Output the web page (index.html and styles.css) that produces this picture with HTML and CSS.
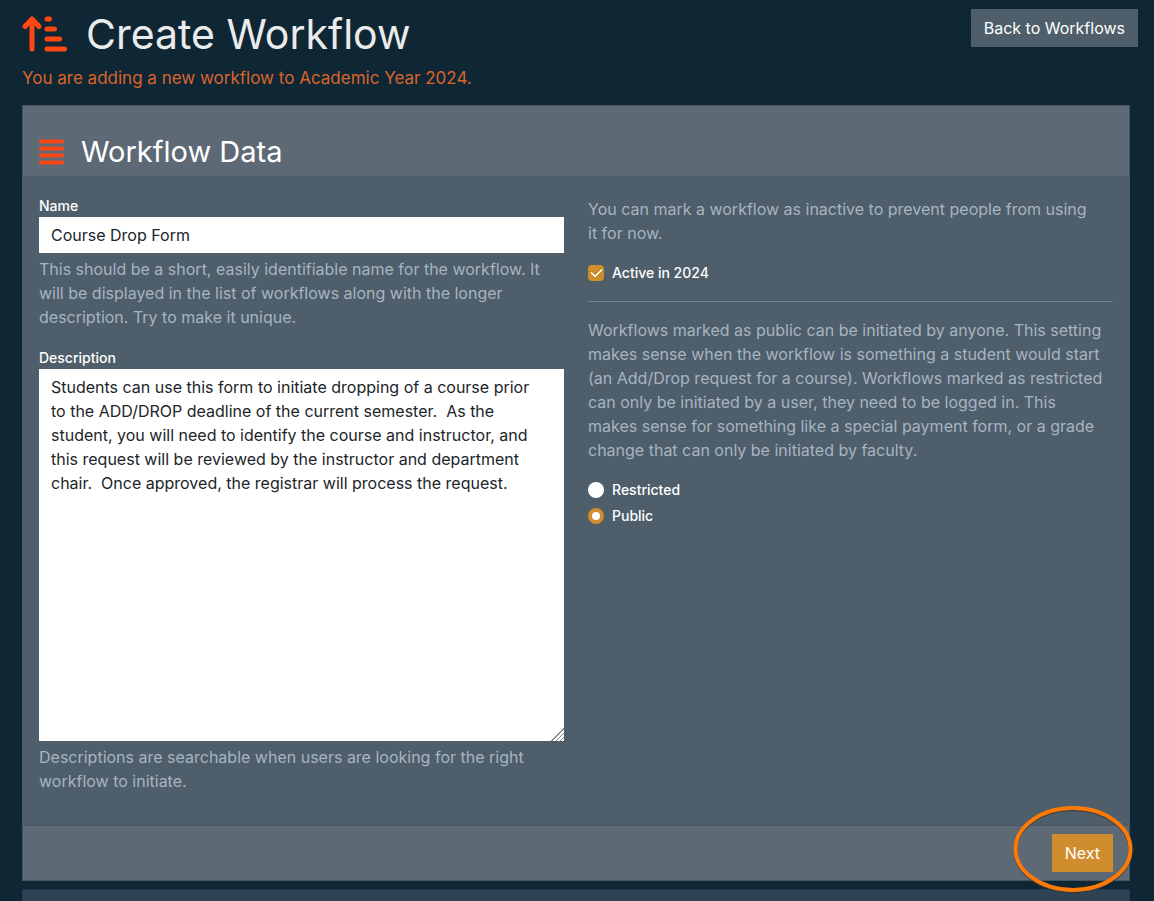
FILE: index.html
```html
<!DOCTYPE html>
<html lang="en">
<head>
<meta charset="utf-8">
<meta name="viewport" content="width=device-width, initial-scale=1">
<title>Create Workflow</title>
<link rel="stylesheet" href="styles.css">
</head>
<body>
<header class="page-header">
  <div class="heading">
    <h1 class="page-title">
      <svg class="title-icon" viewBox="0 0 46 36" aria-hidden="true">
        <path d="M10 33V4M3 10.500L10 3L17 10.500M25 3h2.500M25 13h7.500M25 23h12.500M25 33h17.500"/>
      </svg>
      Create Workflow
    </h1>
    <p class="notice">You are adding a new workflow to Academic Year 2024.</p>
  </div>
  <button type="button" class="button">Back to Workflows</button>
</header>

<main class="content">
  <form class="panel">
    <div class="panel-header">
      <svg class="panel-icon" viewBox="0 0 25 26" aria-hidden="true">
        <path d="M2 2.500h21M2 9.500h21M2 16.500h21M2 23.500h21"/>
      </svg>
      <h2 class="panel-title">Workflow Data</h2>
    </div>
    <div class="panel-body">
      <div class="column">
        <div class="field">
          <label class="label" for="name">Name</label>
          <input class="input" id="name" type="text" value="Course Drop Form">
          <p class="help">This should be a short, easily identifiable name for the workflow. It will be displayed in the list of workflows along with the longer description. Try to make it unique.</p>
        </div>
        <div class="field">
          <label class="label" for="description">Description</label>
          <textarea class="input textarea" id="description" rows="15">Students can use this form to initiate dropping of a course prior to the ADD/DROP deadline of the current semester.  As the student, you will need to identify the course and instructor, and this request will be reviewed by the instructor and department chair.  Once approved, the registrar will process the request.</textarea>
          <p class="help">Descriptions are searchable when users are looking for the right workflow to initiate.</p>
        </div>
      </div>
      <div class="column options">
        <p class="copy">You can mark a workflow as inactive to prevent people from using it&nbsp;for now.</p>
        <label class="choice"><input class="check" type="checkbox" checked>Active in 2024</label>
        <hr class="rule">
        <p class="copy">Workflows marked as public can be initiated by anyone. This setting makes sense when the workflow is something a student would start (an Add/Drop request for a course). Workflows marked as restricted can only be initiated by a user, they need to be logged in. This makes sense for something like a special payment form, or a grade change that can only be initiated by faculty.</p>
        <label class="choice"><input class="radio" type="radio" name="access">Restricted</label>
        <label class="choice"><input class="radio" type="radio" name="access" checked>Public</label>
      </div>
    </div>
    <div class="panel-footer">
      <div class="next">
        <button type="button" class="button button-primary">Next</button>
        <svg class="ring" viewBox="0 0 128 96" aria-hidden="true">
          <ellipse class="ring-shade" cx="64" cy="49" rx="57.500" ry="41"/>
          <ellipse class="ring-line" cx="64" cy="48" rx="57.500" ry="41"/>
        </svg>
      </div>
    </div>
  </form>
  <section class="panel panel-pending"></section>
</main>
</body>
</html>
```
FILE: styles.css
```css
* {
  box-sizing: border-box;
}

body {
  display: flex;
  flex-direction: column;
  height: 100vh;
  margin: 0;
  overflow-x: hidden;
  background: #0f2635;
  color: #fff;
  font: 16px/24px Inter, "Liberation Sans", sans-serif;
}

h1, h2, p {
  margin: 0;
  font-weight: 400;
}

.page-header {
  display: flex;
  justify-content: space-between;
  align-items: flex-start;
  padding: 9px 16px 15px 22px;
}

.page-title {
  display: flex;
  align-items: center;
  gap: 18px;
  padding-bottom: 7px;
  color: #ebebeb;
  font-size: 41px;
  line-height: 50px;
}

.title-icon {
  width: 46px;
  height: 36px;
  fill: none;
  stroke: #ff4713;
  stroke-width: 5;
  stroke-linecap: round;
  stroke-linejoin: round;
}

.notice {
  color: #d9652a;
  font-size: 17px;
}

.button {
  padding: 7px 13px;
  border: 0;
  background: #4e5e6a;
  color: #fff;
  font: inherit;
}

.button-primary {
  background: #cf8d2e;
}

.content {
  display: flex;
  flex: 1;
  flex-direction: column;
  gap: 8px;
  padding: 0 24px 0 22px;
}

.panel {
  border: 1px solid #485661;
  background: #4e5e6a;
}

.panel-header {
  display: flex;
  align-items: center;
  gap: 17px;
  padding: 27px 16px 5px;
  border-bottom: 1px solid #4c5965;
  background: #5d6a76;
}

.panel-icon {
  width: 25px;
  height: 26px;
  fill: none;
  stroke: #ff4713;
  stroke-width: 4;
  stroke-linecap: round;
}

.panel-title {
  font-size: 29px;
  line-height: 38px;
}

.panel-body {
  display: grid;
  grid-template-columns: 1fr 1fr;
  gap: 24px;
  padding: 18px 16px 32px;
}

.column {
  display: flex;
  flex-direction: column;
  gap: 18px;
  min-width: 0;
}

.options {
  gap: 0;
  padding-top: 2px;
}

.field {
  display: flex;
  flex-direction: column;
}

.label {
  font-size: 14px;
  line-height: 22px;
  font-weight: 500;
}

.input {
  display: block;
  width: 100%;
  height: 36px;
  padding: 6px 12px;
  border: 0;
  border-radius: 0;
  background: #fff;
  color: #212529;
  font: inherit;
}

.textarea {
  height: auto;
  padding-right: 24px;
  resize: vertical;
}

.textarea::-webkit-resizer {
  background:
    linear-gradient(135deg, #fff 50%, transparent 50%),
    repeating-linear-gradient(135deg, #888 0 1px, #fff 1px 3px);
}

.help {
  padding-top: 4px;
  color: #a7b4c1;
}

.copy {
  padding: 0 10px 16px 0;
  color: #a7b4c1;
}

.choice {
  display: flex;
  align-items: center;
  gap: 8px;
  margin-bottom: 2px;
  font-size: 14px;
  font-weight: 500;
}

.check,
.radio {
  display: grid;
  place-items: center;
  width: 16px;
  height: 16px;
  margin: 0;
  appearance: none;
  background: #fff;
}

.check {
  border-radius: 4px;
}

.radio {
  border-radius: 50%;
}

.check:checked,
.radio:checked {
  background: #cf8d2e;
}

.check:checked::before {
  content: "";
  width: 9px;
  height: 5px;
  margin-bottom: 3px;
  border: solid #fff;
  border-width: 0 0 2px 2px;
  border-radius: 1px;
  transform: rotate(-45deg);
}

.radio:checked::before {
  content: "";
  width: 8px;
  height: 8px;
  border-radius: 50%;
  background: #fff;
}

.rule {
  width: 100%;
  margin: 14px 0 16px;
  border: 0;
  border-top: 1px solid #74828f;
}

.panel-footer {
  display: flex;
  justify-content: flex-end;
  padding: 8px 16px;
  border-top: 1px solid #4c5965;
  background: #5d6a76;
}

.next {
  position: relative;
}

.ring {
  position: absolute;
  top: -33px;
  right: -24px;
  width: 128px;
  height: 96px;
  fill: none;
  stroke-width: 4;
  pointer-events: none;
}

.ring-shade {
  stroke: #34383d;
}

.ring-line {
  stroke: #ff7a05;
}

.panel-pending {
  flex: 1;
  border-bottom: 0;
  border-color: #263948;
  background: #2f4354;
}
```
